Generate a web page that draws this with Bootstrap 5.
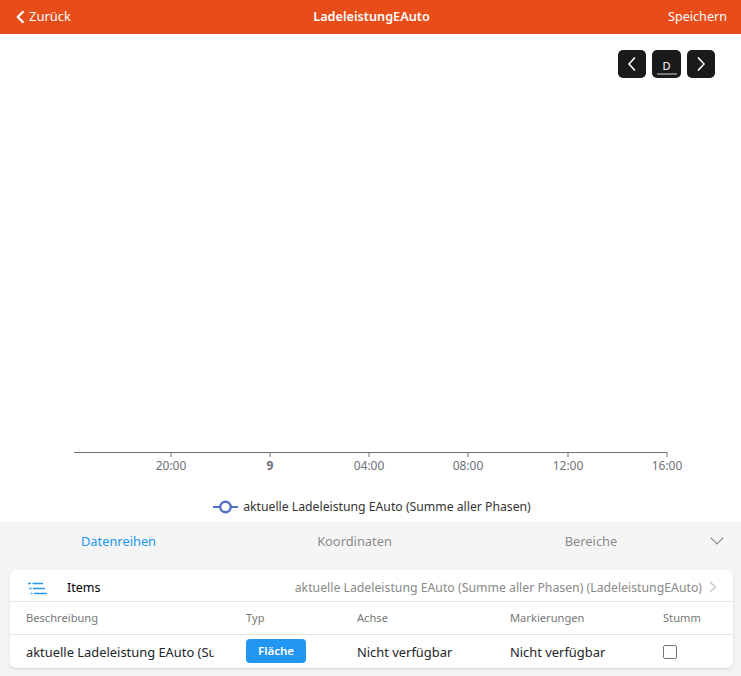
<!DOCTYPE html>
<html lang="de">
<head>
<meta charset="utf-8">
<title>LadeleistungEAuto</title>
<link href="https://cdn.jsdelivr.net/npm/bootstrap@5.3.0/dist/css/bootstrap.min.css" rel="stylesheet">
<style>
html,body{height:100%;}
body{font-family:"Noto Sans","Open Sans",sans-serif;font-size:13px;background:#f3f3f3;color:#000;width:741px;height:676px;overflow:hidden;}
.topbar{height:34px;background:#e84c18;color:#fff;padding:0 14px 0 16px;font-size:13px;}
.topbar a{color:#fff;text-decoration:none;}
.topbar-side{width:120px;}
.topbar-save{font-size:12.6px;}
.topbar-title{font-weight:600;font-size:12.7px;}
.chart-zone{height:488px;background:#fff;}
.tool-row{padding:16px 26px 0 0;gap:6px;width:200px;}
.tool-btn{height:28px;background:#1a1a1a;border:0;border-radius:5px;padding:0;color:#fff;}
.tool-btn.sq{width:28px;}
.tool-btn.mid{width:29px;font-size:11px;line-height:1;padding-top:7px;}
.tool-btn.mid span{display:block;width:20px;margin:0 auto;border-bottom:2px solid #777;padding-bottom:2px;}
.chart-pad{height:74px;}
.axis-svg{display:block;margin-top:344px;}
.axis-svg text{font-family:"Noto Sans","Open Sans",sans-serif;font-size:12px;fill:#6e7079;text-anchor:middle;}
.legend-row{height:24px;margin-top:2px;padding-left:3px;gap:5px;font-size:12.22px;color:#333;}
.tab-row{height:48px;background:#f5f5f5;padding-bottom:8px;}
.tab-item{color:#8c8c8c;font-size:12.85px;text-align:center;}
.tab-item.on{color:#2196f3;}
.t1{width:237px;}.t2{width:235px;}.t3{width:238px;}
.tab-caret{width:31px;line-height:0;padding-bottom:2px;}
.panel{margin:0 8px 0 10px;border-radius:6px;border:0;box-shadow:0 1px 2px rgba(0,0,0,.12);overflow:hidden;}
.panel-head{height:32px;padding:5px 31px 0 18px;border-bottom:1px solid #e4e4e4;}
.panel-label{margin-left:20px;font-size:12.5px;}
.panel-value{color:#8a8a8a;font-size:12.28px;white-space:nowrap;}
.head-chevron{right:16px;top:11px;}
.grid-table{table-layout:fixed;width:723px;margin:0;--bs-table-bg:transparent;}
.grid-table th{font-weight:400;color:#777;font-size:11.15px;height:32px;padding:2px 0 0;vertical-align:middle;border-bottom:1px solid #e4e4e4;}
.grid-table td{height:34px;padding:0;vertical-align:middle;border:0;font-size:12.9px;}
.grid-table td.cell-text{padding-top:2px;}
.grid-table .first{padding-left:16px;width:236px;}
.col-typ{width:111px;}.col-mid{width:153px;}.col-mute{width:70px;}
.clip-cell{width:188px;overflow:hidden;white-space:nowrap;}
.type-btn{width:60px;height:24px;background:#2196f3;border:0;border-radius:4px;color:#fff;font-size:11.5px;font-weight:600;padding:0;line-height:24px;}
.mute-box{display:block;width:14px;height:14px;margin:0;border:1px solid #767676;border-radius:2px;background:#fff;appearance:none;}
</style>
</head>
<body>
<header class="topbar d-flex align-items-center justify-content-between">
  <a href="#" class="topbar-side d-flex align-items-center gap-1">
    <svg width="9" height="14" viewBox="0 0 9 14"><path d="M7.500 1.200 1.800 7l5.700 5.800" fill="none" stroke="#fff" stroke-width="2.200"/></svg>
    <span>Zurück</span>
  </a>
  <div class="topbar-title">LadeleistungEAuto</div>
  <a href="#" class="topbar-side topbar-save text-end">Speichern</a>
</header>

<section class="chart-zone">
  <div class="tool-row d-flex justify-content-end position-absolute end-0">
    <button class="tool-btn sq d-flex align-items-center justify-content-center"><svg width="10" height="16" viewBox="0 0 10 16"><path d="M8 1.500 2 8l6 6.500" fill="none" stroke="#fff" stroke-width="1.600"/></svg></button>
    <button class="tool-btn mid"><span>D</span></button>
    <button class="tool-btn sq d-flex align-items-center justify-content-center"><svg width="10" height="16" viewBox="0 0 10 16"><path d="M2 1.500 8 8l-6 6.500" fill="none" stroke="#fff" stroke-width="1.600"/></svg></button>
  </div>
  <div class="chart-pad"></div>
  <svg class="axis-svg" width="741" height="41" viewBox="0 0 741 41">
    <path d="M74 .5H667M171 .5V5M270 .5V5M369 .5V5M468 .5V5M568 .5V5M667 .5V5" stroke="#6e7079" fill="none"/>
    <text x="171" y="18">20:00</text>
    <text x="270" y="18" font-weight="700">9</text>
    <text x="369" y="18">04:00</text>
    <text x="468" y="18">08:00</text>
    <text x="568" y="18">12:00</text>
    <text x="667" y="18">16:00</text>
  </svg>
  <div class="legend-row d-flex align-items-center justify-content-center">
    <svg width="25" height="14" viewBox="0 0 25 14"><path d="M0 7H25" stroke="#5470c6" stroke-width="2"/><circle cx="12.500" cy="7" r="5.200" fill="#fff" stroke="#5470c6" stroke-width="2.400"/></svg>
    <span>aktuelle Ladeleistung EAuto (Summe aller Phasen)</span>
  </div>
</section>

<nav class="tab-row d-flex align-items-center">
  <div class="tab-item on t1">Datenreihen</div>
  <div class="tab-item t2">Koordinaten</div>
  <div class="tab-item t3">Bereiche</div>
  <div class="tab-caret"><svg width="14" height="8" viewBox="0 0 14 8"><path d="M.7.7 7 7 13.300.7" fill="none" stroke="#8c8c8c" stroke-width="1.200"/></svg></div>
</nav>

<div class="card panel">
  <div class="panel-head d-flex align-items-center">
    <svg width="19" height="13" viewBox="0 0 19 13"><path d="M4.500 1.500H15M5 6.500H17M6 11.500H19" stroke="#2196f3" stroke-width="1.500"/><path d="M0 1.500H3M1.500 6.500H3.500M3 11.500H4.500" stroke="#2196f3" stroke-width="1.500"/></svg>
    <span class="panel-label">Items</span>
    <span class="panel-value ms-auto">aktuelle Ladeleistung EAuto (Summe aller Phasen) (LadeleistungEAuto)</span>
    <svg class="position-absolute head-chevron" width="8" height="12" viewBox="0 0 8 12"><path d="M1 1 6.500 6 1 11" fill="none" stroke="#c4c4c4" stroke-width="1.300"/></svg>
  </div>
  <table class="table grid-table">
    <thead>
      <tr><th class="first">Beschreibung</th><th class="col-typ">Typ</th><th class="col-mid">Achse</th><th class="col-mid">Markierungen</th><th class="col-mute">Stumm</th></tr>
    </thead>
    <tbody>
      <tr>
        <td class="first cell-text"><div class="clip-cell">aktuelle Ladeleistung EAuto (Summe aller Phasen)</div></td>
        <td><button class="type-btn">Fläche</button></td>
        <td class="cell-text">Nicht verfügbar</td>
        <td class="cell-text">Nicht verfügbar</td>
        <td class="cell-text"><input type="checkbox" class="mute-box" aria-label="Stumm"></td>
      </tr>
    </tbody>
  </table>
</div>
<script src="https://cdn.jsdelivr.net/npm/bootstrap@5.3.0/dist/js/bootstrap.bundle.min.js"></script>
</body>
</html>
